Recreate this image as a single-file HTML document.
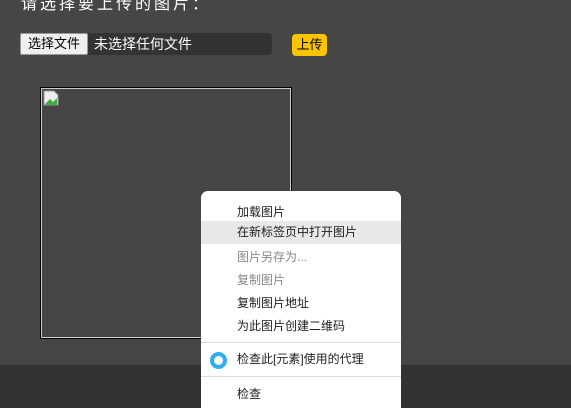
<!DOCTYPE html>
<html><head><meta charset="utf-8"><style>
html,body{margin:0;width:571px;height:408px;overflow:hidden;}
body{background:#464646;position:relative;font-family:"Liberation Sans","Noto Sans CJK SC",sans-serif;}
.abs{position:absolute}
.title{left:21px;top:-10px;color:#fff;font-size:16px;letter-spacing:3px;}
.file{left:20px;top:33px;width:252px;height:22px;background:#333;border-radius:4px;}
.btn{left:20px;top:33px;width:68px;height:22px;background:#efefef;border:1px solid #999;box-sizing:border-box;font-size:13px;line-height:20px;text-align:center;color:#000;border-radius:2px}
.ft{left:94px;top:36px;color:#fff;font-size:14px;line-height:16px}
.up{left:292px;top:34px;width:35px;height:22px;background:#fcc400;border-radius:4px;font-size:13px;line-height:22px;text-align:center;color:#000}
.img{left:40px;top:87px;width:252px;height:252px;border:1px solid #000;box-sizing:border-box;}
.img2{left:41px;top:88px;width:250px;height:250px;border:1px solid #ccc;box-sizing:border-box;}
.bot{left:0;top:365px;width:571px;height:43px;background:#333}
.menu{left:201px;top:191px;width:200px;height:217px;background:#fff;border-radius:7px 7px 0 0;overflow:hidden}
.it{position:absolute;left:0;width:200px;height:23px;line-height:23px;padding-left:36px;box-sizing:border-box;font-size:12px;color:#202020}
.dis{color:#888}
.hl{background:#e8e8e8}
.sep{position:absolute;left:0;width:200px;height:1px;background:#dcdcdc}
.dot{position:absolute;width:9px;height:9px;border:4px solid #2eaef0;border-radius:50%}
</style></head><body>
<div class="abs title">请选择要上传的图片：</div>
<div class="abs file"></div>
<div class="abs btn">选择文件</div>
<div class="abs ft">未选择任何文件</div>
<div class="abs up">上传</div>
<div class="abs img"></div><div class="abs img2"></div>
<svg class="abs" style="left:43px;top:90px" width="16" height="16"><path d="M1 1h10l4 4v10H1z" fill="#eee" stroke="#999"/><path d="M2 14l5-5 3 3 4-4v7H2z" fill="#4a4"/></svg>
<div class="abs bot"></div>
<div class="abs menu">
<div class="it" style="top:10px">加载图片</div>
<div class="it hl" style="top:30px">在新标签页中打开图片</div>
<div class="it dis" style="top:55px">图片另存为...</div>
<div class="it dis" style="top:78px">复制图片</div>
<div class="it" style="top:101px">复制图片地址</div>
<div class="it" style="top:124px">为此图片创建二维码</div>
<div class="sep" style="top:151px"></div>
<div class="it" style="top:157px">检查此[元素]使用的代理</div>
<div class="sep" style="top:185px"></div>
<div class="it" style="top:192px">检查</div>
</div>
<div class="dot" style="left:210px;top:352px"></div>
</body></html>
